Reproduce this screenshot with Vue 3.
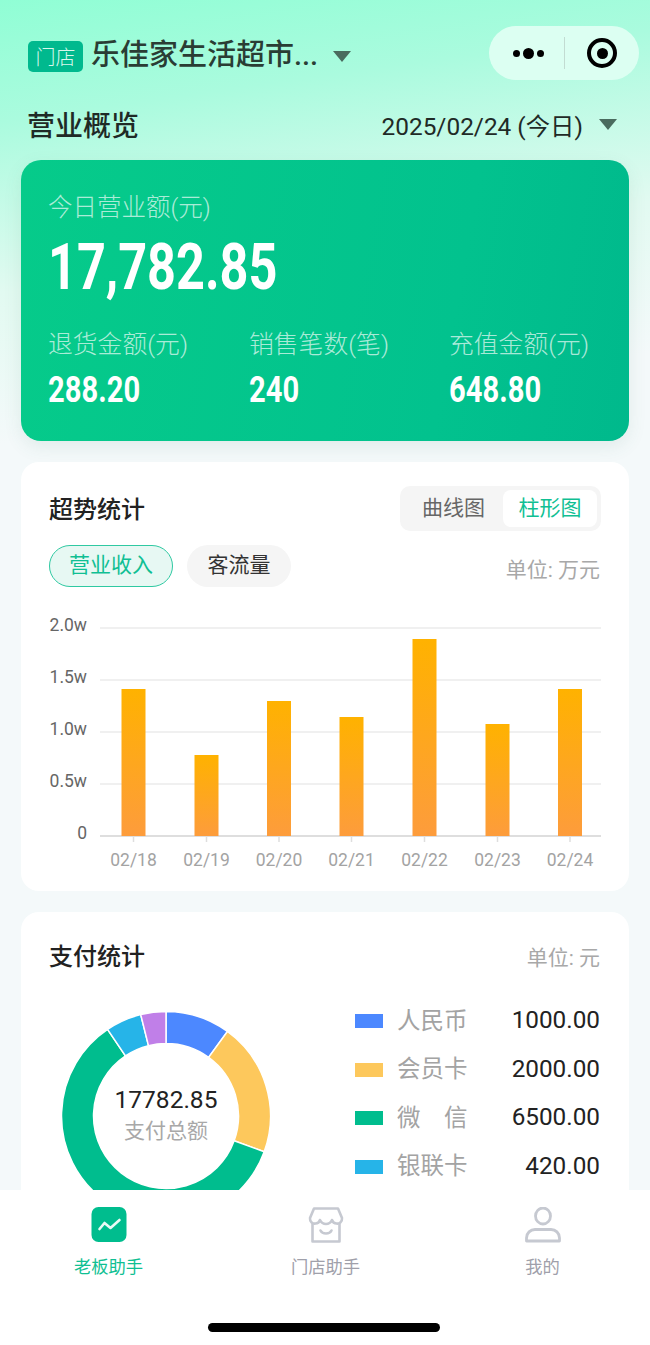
<template>
  <div class="page">
    <main class="content">
      <header class="store-bar">
        <span class="store-tag">门店</span>
        <span class="store-name">乐佳家生活超市...</span>
        <i class="caret store-caret"></i>
        <div class="capsule">
          <span class="capsule__dots"><i></i><i></i><i></i></span>
          <span class="capsule__line"></span>
          <span class="capsule__target"><i></i></span>
        </div>
      </header>

      <div class="overview-head">
        <h1>营业概览</h1>
        <div class="date-pick">
          <span>2025/02/24 (今日)</span>
          <i class="caret"></i>
        </div>
      </div>

      <section class="hero">
        <div class="hero__label hero__label--main">今日营业额(元)</div>
        <div class="hero__total">17,782.85</div>
        <div class="hero__grid">
          <div v-for="item in heroStats" :key="item.label">
            <div class="hero__label">{{ item.label }}</div>
            <div class="hero__value">{{ item.value }}</div>
          </div>
        </div>
      </section>

      <section class="card trend">
        <div class="card__head">
          <h2>超势统计</h2>
          <div class="segment">
            <span>曲线图</span>
            <span class="is-active">柱形图</span>
          </div>
        </div>
        <div class="trend__filters">
          <span class="pill is-active">营业收入</span>
          <span class="pill">客流量</span>
          <span class="unit trend__unit">单位: 万元</span>
        </div>
        <svg class="chart" width="566" height="260" viewBox="0 0 566 260">
          <defs>
            <linearGradient id="barFill" x1="0" y1="0" x2="0" y2="1">
              <stop offset="0" stop-color="#ffb200" />
              <stop offset="1" stop-color="#fd9c3c" />
            </linearGradient>
          </defs>
          <g v-for="tick in yTicks" :key="tick.label">
            <line x1="64" x2="565" :y1="tick.y" :y2="tick.y" :stroke="tick.y === axisY ? '#dedede' : '#f0f0f0'" stroke-width="2" />
            <text class="chart__y" x="51" :y="tick.y - 2" text-anchor="end">{{ tick.label }}</text>
          </g>
          <g v-for="bar in bars" :key="bar.day">
            <rect :x="bar.x - 12" :y="axisY - bar.h" width="24" :height="bar.h" fill="url(#barFill)" />
            <line :x1="bar.x" :x2="bar.x" :y1="axisY" :y2="axisY + 6" stroke="#dedede" stroke-width="1.5" />
            <text class="chart__x" :x="bar.x" y="246" text-anchor="middle">{{ bar.day }}</text>
          </g>
        </svg>
      </section>

      <section class="card pay">
        <div class="card__head pay__head">
          <h2>支付统计</h2>
          <span class="unit pay__unit">单位: 元</span>
        </div>
        <div class="pay__body">
          <div class="donut">
            <svg width="210" height="210" viewBox="0 0 210 210">
              <path v-for="s in slices" :key="s.color" :d="s.d" :fill="s.color" stroke="#fff" stroke-width="1.5" />
            </svg>
            <div class="donut__text">
              <strong>17782.85</strong>
              <span>支付总额</span>
            </div>
          </div>
          <ul class="legend">
            <li v-for="row in legend" :key="row.name">
              <i :style="{ background: row.color }"></i>
              <span class="legend__name">{{ row.name }}</span>
              <span class="legend__value">{{ row.value }}</span>
            </li>
          </ul>
        </div>
      </section>
    </main>

    <nav class="tabbar">
      <div class="tabbar__items">
        <div class="tab is-active">
          <svg width="36" height="36" viewBox="0 0 36 36">
            <rect x="0.5" y="0" width="35" height="35" rx="7" fill="#00bd8e" />
            <path d="M8.5 22 L13.5 16 L19.5 21 L28.5 13" fill="none" stroke="#eafaf5" stroke-width="2.6" stroke-linecap="round" stroke-linejoin="round" />
          </svg>
          <span>老板助手</span>
        </div>
        <div class="tab">
          <svg width="36" height="36" viewBox="0 0 36 36" fill="none" stroke="#c6c9d1" stroke-width="2.6" stroke-linecap="round" stroke-linejoin="round">
            <path d="M6 1.5 H30 L34 11 C34.5 15 31 17 28.5 16.5 C26 16.5 24.5 14.5 24 13 C22.5 16 20 17 18 17 C16 17 13.5 16 12 13 C11.5 14.5 10 16.5 7.5 16.5 C5 17 1.5 15 2 11 Z" />
            <path d="M4.5 17 V34.5 H31.5 V17" />
            <path d="M12.5 23.5 C14.5 27.5 21.5 27.5 23.5 23.5" />
          </svg>
          <span>门店助手</span>
        </div>
        <div class="tab">
          <svg width="36" height="36" viewBox="0 0 36 36" fill="none" stroke="#c6c9d1" stroke-width="2.8" stroke-linecap="round" stroke-linejoin="round">
            <ellipse cx="18" cy="9" rx="7.5" ry="8" />
            <path d="M1.5 34 V31 C1.5 26 5.5 22.5 10 22.5 H26 C30.5 22.5 34.5 26 34.5 31 V34 Z" />
          </svg>
          <span>我的</span>
        </div>
      </div>
      <div class="home-bar"></div>
    </nav>
  </div>
</template>

<script setup>
const heroStats = [
  { label: '退货金额(元)', value: '288.20' },
  { label: '销售笔数(笔)', value: '240' },
  { label: '充值金额(元)', value: '648.80' }
]

// chart geometry, y = 0 is the top of the svg
const axisY = 216
const yTicks = [
  { label: '2.0w', y: 8 },
  { label: '1.5w', y: 60 },
  { label: '1.0w', y: 112 },
  { label: '0.5w', y: 164 },
  { label: '0', y: 216 }
]
const bars = [
  { day: '02/18', x: 97.5, h: 147 },
  { day: '02/19', x: 170.5, h: 81 },
  { day: '02/20', x: 243, h: 135 },
  { day: '02/21', x: 315.5, h: 119 },
  { day: '02/22', x: 388.5, h: 197 },
  { day: '02/23', x: 461.5, h: 112 },
  { day: '02/24', x: 534, h: 147 }
]

const legend = [
  { name: '人民币', value: '1000.00', color: '#4c88ff' },
  { name: '会员卡', value: '2000.00', color: '#fdc85c' },
  { name: '微　信', value: '6500.00', color: '#00bd8e' },
  { name: '银联卡', value: '420.00', color: '#26b4e8' }
]

function polar(r, deg) {
  const a = (deg * Math.PI) / 180
  return `${(105 + r * Math.sin(a)).toFixed(2)} ${(105 - r * Math.cos(a)).toFixed(2)}`
}

function ring(from, to) {
  const large = to - from > 180 ? 1 : 0
  return `M${polar(104.5, from)} A104.5 104.5 0 ${large} 1 ${polar(104.5, to)} L${polar(72.5, to)} A72.5 72.5 0 ${large} 0 ${polar(72.5, from)} Z`
}

const slices = [
  { from: 0, to: 36, color: '#4c88ff' },
  { from: 36, to: 110, color: '#fdc85c' },
  { from: 110, to: 326, color: '#00bd8e' },
  { from: 326, to: 346, color: '#26b4e8' },
  { from: 346, to: 360, color: '#c07fe8' }
].map((s) => ({ color: s.color, d: ring(s.from, s.to) }))
</script>

<style>
html,
body {
  margin: 0;
  background: #fff;
}
</style>

<style scoped>
.page {
  display: flex;
  flex-direction: column;
  width: 650px;
  height: 1345px;
  overflow: hidden;
  font-family: "Roboto", "Noto Sans CJK SC", sans-serif;
  color: #222;
}

.content {
  flex: 1;
  min-height: 0;
  overflow: hidden;
  padding: 26px 21px 0;
  background: linear-gradient(172deg, #90fed5 0, #aafbde 120px, #e2faf1 290px, #f4f9fa 440px);
}

h1,
h2,
ul {
  margin: 0;
  padding: 0;
}

.store-bar {
  display: flex;
  align-items: center;
  height: 54px;
  padding-left: 7px;
}

.store-tag {
  display: flex;
  align-items: center;
  justify-content: center;
  width: 55px;
  height: 31px;
  margin-top: 6px;
  border-radius: 5px;
  background: #00b98e;
  color: #d8f7ec;
  font-size: 20px;
  font-weight: 300;
}

.store-name {
  margin: 4px 0 0 8px;
  color: #2a3d34;
  font-size: 29px;
  line-height: 36px;
  font-weight: 500;
}

.caret {
  display: block;
  width: 0;
  height: 0;
  border-left: 9px solid transparent;
  border-right: 9px solid transparent;
  border-top: 11px solid #4a6b5e;
}

.store-caret {
  margin: 6px 0 0 15px;
}

.capsule {
  display: flex;
  align-items: center;
  width: 150px;
  height: 54px;
  margin-left: auto;
  margin-right: -10px;
  border-radius: 27px;
  background: #dcfff2;
}

.capsule__dots {
  display: flex;
  align-items: center;
  gap: 3px;
  margin-left: 24px;
}

.capsule__dots i {
  width: 7px;
  height: 7px;
  border-radius: 50%;
  background: #000;
}

.capsule__dots i:nth-child(2) {
  width: 11px;
  height: 11px;
}

.capsule__line {
  width: 1px;
  height: 32px;
  margin-left: 20px;
  background: #c2dcd2;
}

.capsule__target {
  display: flex;
  align-items: center;
  justify-content: center;
  box-sizing: border-box;
  width: 30px;
  height: 30px;
  margin-left: 22px;
  border: 4px solid #000;
  border-radius: 50%;
}

.capsule__target i {
  width: 11px;
  height: 11px;
  border-radius: 50%;
  background: #000;
}

.overview-head {
  display: flex;
  align-items: center;
  justify-content: space-between;
  height: 40px;
  margin-top: 24px;
  padding: 0 12px 0 6px;
}

.overview-head h1 {
  color: #1f2a26;
  font-size: 28px;
  font-weight: 500;
}

.date-pick {
  display: flex;
  align-items: center;
  gap: 16px;
  color: #1f2a26;
  font-size: 24.4px;
}

.hero {
  height: 281px;
  box-sizing: border-box;
  margin-top: 16px;
  padding: 30px 27px 0;
  border-radius: 20px;
  background: linear-gradient(100deg, #06cb8a 0%, #02c28e 70%, #00b98c 100%);
  box-shadow: 0 6px 18px rgba(60, 120, 100, 0.1);
  color: #fff;
}

.hero__label {
  color: rgba(255, 255, 255, 0.68);
  font-size: 24.8px;
  line-height: 36px;
  font-weight: 300;
}

.hero__label--main {
  font-size: 24.5px;
}

.hero__total {
  margin-top: 6px;
  font-size: 65px;
  line-height: 70px;
  font-weight: 700;
  transform: scaleX(0.775);
  transform-origin: left center;
}

.hero__grid {
  display: grid;
  grid-template-columns: 201px 200px 200px;
  margin-top: 25px;
}

.hero__value {
  margin-top: 7px;
  font-size: 36px;
  line-height: 40px;
  font-weight: 700;
  transform: scaleX(0.81);
  transform-origin: left center;
}

.card {
  margin-top: 21px;
  padding: 24px 28px 0;
  border-radius: 18px;
  background: #fff;
}

.trend {
  height: 429px;
  box-sizing: border-box;
}

.card__head {
  display: flex;
  align-items: center;
  justify-content: space-between;
}

.card h2 {
  color: #222;
  font-size: 24px;
  font-weight: 500;
}

.trend h2 {
  margin-top: -2px;
}

.segment {
  display: flex;
  box-sizing: border-box;
  width: 201px;
  height: 45px;
  padding: 4px;
  border-radius: 10px;
  background: #f5f5f5;
  color: #666;
  font-size: 21px;
}

.segment span {
  display: flex;
  flex: 1;
  align-items: center;
  justify-content: center;
  padding-bottom: 5px;
}

.segment .is-active {
  flex: none;
  width: 94px;
  box-sizing: border-box;
  border-radius: 8px;
  background: #fff;
  color: #10bf93;
}

.trend__filters {
  display: flex;
  align-items: center;
  gap: 14px;
  margin-top: 14px;
}

.pill {
  display: flex;
  align-items: center;
  justify-content: center;
  box-sizing: border-box;
  width: 104px;
  height: 42px;
  padding-bottom: 6px;
  border-radius: 21px;
  background: #f5f5f5;
  color: #333;
  font-size: 21px;
}

.pill.is-active {
  width: 124px;
  border: 1px solid #2fc9a2;
  background: #e7f8f3;
  color: #10bf93;
}

.unit {
  color: #a8a8a8;
  font-size: 21px;
}

.trend__unit {
  margin: 4px 1px 0 auto;
}

.chart {
  display: block;
  margin-top: 33px;
  margin-left: -13px;
  overflow: visible;
}

.chart__y {
  fill: #666;
  font-size: 17.5px;
  dominant-baseline: middle;
}

.chart__x {
  fill: #a3a3a3;
  font-size: 17.5px;
}

.pay {
  height: 500px;
  box-sizing: border-box;
  padding-right: 29px;
}

.pay__head h2 {
  line-height: 42px;
}

.pay__unit {
  margin-bottom: 2px;
}

.pay__body {
  display: flex;
  justify-content: space-between;
  margin-top: 19px;
}

.donut {
  position: relative;
  width: 210px;
  height: 210px;
  margin: 14px 0 0 12px;
}

.donut svg {
  display: block;
}

.donut__text {
  position: absolute;
  inset: 0;
  display: flex;
  flex-direction: column;
  align-items: center;
  justify-content: center;
  padding-bottom: 2px;
}

.donut__text strong {
  color: #222;
  font-size: 24.5px;
  line-height: 32px;
  font-weight: 400;
}

.donut__text span {
  color: #a8a8a8;
  font-size: 21px;
  line-height: 30px;
}

.legend {
  width: 245px;
  list-style: none;
}

.legend li {
  display: flex;
  align-items: center;
  height: 48.5px;
}

.legend i {
  width: 28px;
  height: 14px;
}

.legend__name {
  margin: -5px 0 0 14px;
  color: #a3a3a3;
  font-size: 23.5px;
}

.legend__value {
  margin: -3px 0 0 auto;
  color: #222;
  font-size: 24.3px;
}

.tabbar {
  height: 155px;
  flex: none;
  background: #fff;
}

.tabbar__items {
  display: grid;
  grid-template-columns: repeat(3, 217px);
  padding-top: 17px;
}

.tab {
  display: flex;
  flex-direction: column;
  align-items: center;
  color: #a0a0aa;
  font-size: 17.3px;
}

.tab svg {
  display: block;
}

.tab span {
  margin-top: 12px;
  line-height: 24px;
}

.tab.is-active {
  color: #10bf93;
}

.home-bar {
  width: 232px;
  height: 9px;
  margin: 44px 0 0 208px;
  border-radius: 5px;
  background: #000;
}
</style>
